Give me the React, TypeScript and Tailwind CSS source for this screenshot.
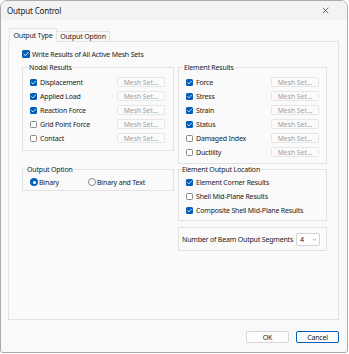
import React from "react";

const F = { fontFamily: '"Noto Sans", "Open Sans", sans-serif' };

function Check({ checked }: { checked: boolean }) {
  return checked ? (
    <span className="flex h-[7px] w-[7px] shrink-0 items-center justify-center rounded-[1.5px] bg-[#005fb8]">
      <svg viewBox="0 0 8 8" className="h-[7px] w-[7px]">
        <path d="M1.8 4.1 L3.3 5.6 L6.3 2.5" fill="none" stroke="white" strokeWidth="0.9" strokeLinecap="round" strokeLinejoin="round" />
      </svg>
    </span>
  ) : (
    <span className="h-[7px] w-[7px] shrink-0 rounded-[1.5px] border border-[#8a8a8a] bg-[#fdfdfd]" />
  );
}

function BigCheck() {
  return (
    <span className="flex h-[8px] w-[8px] shrink-0 items-center justify-center rounded-[1.5px] bg-[#005fb8]">
      <svg viewBox="0 0 8 8" className="h-[8px] w-[8px]">
        <path d="M1.8 4.1 L3.3 5.6 L6.3 2.5" fill="none" stroke="white" strokeWidth="0.9" strokeLinecap="round" strokeLinejoin="round" />
      </svg>
    </span>
  );
}

function MeshBtn() {
  return (
    <span className="flex h-[10px] w-[48px] shrink-0 items-center justify-center rounded-[1.5px] border border-[#e6e6e6] bg-[#fbfbfb] text-[6.8px] tracking-[0px] text-[#9d9d9d]">
      Mesh Set...
    </span>
  );
}

function Row({ label, checked, mesh = true }: { label: string; checked: boolean; mesh?: boolean }) {
  return (
    <div className="flex h-[14px] items-center">
      <Check checked={checked} />
      <span className="ml-[3px] flex-1 whitespace-nowrap">{label}</span>
      {mesh && <MeshBtn />}
    </div>
  );
}

function Radio({ on }: { on: boolean }) {
  return on ? (
    <span className="flex h-[8px] w-[8px] shrink-0 items-center justify-center rounded-full bg-[#005fb8]">
      <span className="h-[3px] w-[3px] rounded-full bg-white" />
    </span>
  ) : (
    <span className="h-[8px] w-[8px] shrink-0 rounded-full border border-[#8a8a8a] bg-[#fdfdfd]" />
  );
}

export default function App() {
  return (
    <div className="h-[354px] w-[349px] bg-white text-[7px] leading-[9px] tracking-[-0.18px] text-[#1b1b1b]" style={F}>
      <div className="flex h-[353px] w-[348px] flex-col overflow-hidden rounded-t-[7px] rounded-b-[3px] border border-[#ababab] bg-[#f9f9f9]">
        {/* title bar */}
        <div className="flex h-[19px] shrink-0 items-center justify-between bg-[#f3f3f3] pl-[6px] pr-[18px]">
          <span className="text-[8px]">Output Control</span>
          <svg viewBox="0 0 8 8" className="h-[7px] w-[7px]">
            <path d="M0.8 0.8 L7.2 7.2 M7.2 0.8 L0.8 7.2" stroke="#333" strokeWidth="0.8" />
          </svg>
        </div>
        <div className="flex flex-col px-[7px]">
          {/* tabs */}
          <div className="relative z-10 mt-[8px] flex items-start pl-[1px]">
            <div className="-mb-[1px] flex h-[14px] w-[48px] items-start justify-center border border-b-0 border-[#e2e2e2] bg-[#fafafa] pt-[2px]">
              Output Type
            </div>
            <div className="mt-[3px] flex h-[10px] w-[53px] items-center justify-center border border-l-0 border-b-0 border-[#e2e2e2] bg-[#f9f9f9]">
              Output Option
            </div>
          </div>
          {/* panel */}
          <div className="flex h-[279px] w-[331px] flex-col border border-[#e2e2e2] bg-[#fafafa] pl-[13px] pt-[7px]">
            <div className="flex h-[10px] items-center">
              <BigCheck />
              <span className="ml-[2px]">Write Results of All Active Mesh Sets</span>
            </div>
            <div className="mt-[4px] flex gap-[4px]">
              {/* left column */}
              <div className="flex w-[152px] flex-col">
                <fieldset className="border border-[#e2e2e2] pb-[5px] pl-[7px] pr-[8px] pt-[3px]">
                  <legend className="-ml-[2px] px-[1px]">Nodal Results</legend>
                  <Row label="Displacement" checked />
                  <Row label="Applied Load" checked />
                  <Row label="Reaction Force" checked />
                  <Row label="Grid Point Force" checked={false} />
                  <Row label="Contact" checked={false} />
                </fieldset>
                <fieldset className="mt-[14px] border border-[#e2e2e2] pb-[1px] pl-[7px] pr-[8px] pt-[1px]">
                  <legend className="-ml-[4px] px-[1px]">Output Option</legend>
                  <div className="flex h-[14px] items-center">
                    <Radio on />
                    <span className="ml-[1px] w-[49px]">Binary</span>
                    <Radio on={false} />
                    <span className="ml-[1px]">Binary and Text</span>
                  </div>
                </fieldset>
              </div>
              {/* right column */}
              <div className="flex w-[149px] flex-col">
                <fieldset className="border border-[#e2e2e2] pb-[4px] pl-[7px] pr-[7px] pt-[3px]">
                  <legend className="-ml-[3px] px-[1px]">Element Results</legend>
                  <Row label="Force" checked />
                  <Row label="Stress" checked />
                  <Row label="Strain" checked />
                  <Row label="Status" checked />
                  <Row label="Damaged Index" checked={false} />
                  <Row label="Ductility" checked={false} />
                </fieldset>
                <fieldset className="mt-[1px] border border-[#e2e2e2] pb-[3px] pl-[7px] pr-[7px] pt-[1px]">
                  <legend className="-ml-[5px] px-[1px]">Element Output Location</legend>
                  <Row label="Element Corner Results" checked mesh={false} />
                  <Row label="Shell Mid-Plane Results" checked={false} mesh={false} />
                  <Row label="Composite Shell Mid-Plane Results" checked mesh={false} />
                </fieldset>
                <div className="mt-[6px] flex h-[24px] items-center border border-[#e2e2e2] pl-[3px] pr-[6px]">
                  <span className="flex-1 whitespace-nowrap">Number of Beam Output Segments</span>
                  <div className="flex h-[13px] w-[24px] items-center justify-between rounded-[2px] border border-[#d4d4d4] bg-white pl-[3px] pr-[2px]">
                    <span>4</span>
                    <svg viewBox="0 0 8 8" className="h-[5px] w-[5px]">
                      <path d="M1.5 3 L4 5.5 L6.5 3" fill="none" stroke="#555" strokeWidth="0.8" />
                    </svg>
                  </div>
                </div>
              </div>
            </div>
          </div>
          {/* buttons */}
          <div className="mt-[11px] flex justify-end gap-[7px] pr-[1px]">
            <div className="flex h-[12px] w-[43px] items-center justify-center rounded-[2px] border border-[#d6d6d6] bg-[#fdfdfd]">
              OK
            </div>
            <div className="flex h-[12px] w-[43px] items-center justify-center rounded-[2px] border border-[#005fb8] bg-[#fdfdfd]">
              Cancel
            </div>
          </div>
        </div>
      </div>
    </div>
  );
}
